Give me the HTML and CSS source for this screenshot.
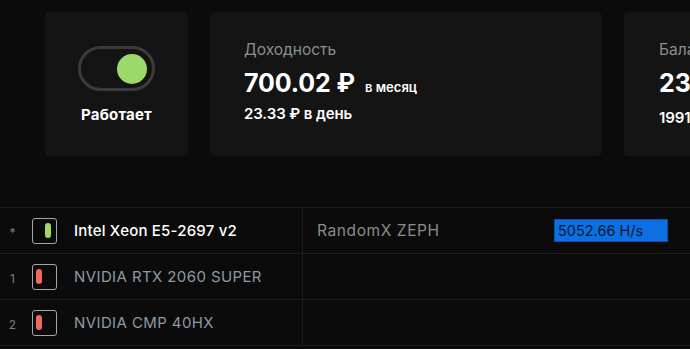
FILE: index.html
```html
<!DOCTYPE html>
<html lang="ru">
<head>
<meta charset="utf-8">
<link rel="stylesheet" href="styles.css">
</head>
<body>
<div class="page">
  <div class="cards">
    <div class="card card-status">
      <div class="toggle"><div class="knob"></div></div>
      <div class="status-label">Работает</div>
    </div>
    <div class="card card-income">
      <div class="card-title">Доходность</div>
      <div class="big-line"><span class="big">700.02 ₽</span><span class="unit">в месяц</span></div>
      <div class="small-line">23.33 ₽ в день</div>
    </div>
    <div class="card card-balance">
      <div class="card-title">Баланс</div>
      <div class="big-line"><span class="big">2331.45 ₽</span></div>
      <div class="small-line small-line2">19917.25 ZEPH</div>
    </div>
  </div>
  <div class="table">
    <div class="row">
      <div class="cell-dev">
        <span class="idx">*</span>
        <span class="chip"><span class="pill pill-on"></span></span>
        <span class="name name-active">Intel Xeon E5-2697 v2</span>
      </div>
      <div class="cell-algo">
        <span class="algo">RandomX ZEPH</span>
        <span class="rate">5052.66 H/s</span>
      </div>
    </div>
    <div class="row">
      <div class="cell-dev">
        <span class="idx">1</span>
        <span class="chip"><span class="pill pill-off"></span></span>
        <span class="name">NVIDIA RTX 2060 SUPER</span>
      </div>
      <div class="cell-algo"></div>
    </div>
    <div class="row">
      <div class="cell-dev">
        <span class="idx">2</span>
        <span class="chip"><span class="pill pill-off"></span></span>
        <span class="name">NVIDIA CMP 40HX</span>
      </div>
      <div class="cell-algo"></div>
    </div>
  </div>
</div>
</body>
</html>
```

FILE: styles.css
```css
html, body {
  margin: 0;
  padding: 0;
  background: #0b0b0b;
  overflow: hidden;
}
body {
  font-family: "Inter", "Noto Sans", sans-serif;
  color: #fff;
  width: 690px;
  height: 349px;
}
.page {
  width: 690px;
  overflow: hidden;
}
.cards {
  display: flex;
  gap: 22px;
  padding: 12px 0 0 45px;
  height: 144px;
}
.card {
  flex: none;
  background: #141414;
  border-radius: 5px;
  height: 144px;
  box-sizing: border-box;
}
.card-status {
  width: 143px;
  display: flex;
  flex-direction: column;
  align-items: center;
  padding-top: 34px;
}
.toggle {
  width: 77px;
  height: 45px;
  box-sizing: border-box;
  border: 3px solid #3b3b3b;
  border-radius: 23px;
  display: flex;
  align-items: center;
  justify-content: flex-end;
  padding-right: 5px;
}
.knob {
  width: 30px;
  height: 30px;
  border-radius: 50%;
  background: #9bd96b;
}
.status-label {
  margin-top: 14px;
  font-size: 15px;
  font-weight: 700;
  letter-spacing: 0.2px;
}
.card-income {
  width: 392px;
  padding: 28px 0 0 34px;
}
.card-balance {
  width: 300px;
  padding: 28px 0 0 35px;
}
.card-title {
  font-size: 15.5px;
  color: #8a8f93;
  line-height: 20px;
}
.big-line {
  display: flex;
  align-items: baseline;
  margin-top: 9px;
  line-height: 28px;
}
.big {
  font-size: 25px;
  font-weight: 700;
  letter-spacing: -0.1px;
}
.unit {
  font-size: 13px;
  font-weight: 600;
  margin-left: 10px;
}
.small-line {
  margin-top: 3px;
  font-size: 15px;
  font-weight: 600;
  letter-spacing: -0.1px;
  line-height: 20px;
}
.small-line2 {
  margin-top: 11px;
}
.table {
  margin-top: 51px;
  border-top: 1px solid #1c1c1c;
}
.row {
  display: grid;
  grid-template-columns: 303px 1fr;
  height: 45px;
  border-bottom: 1px solid #1c1c1c;
}
.cell-dev {
  display: flex;
  align-items: center;
  border-right: 1px solid #1c1c1c;
}
.idx {
  width: 32px;
  text-align: center;
  box-sizing: border-box;
  padding-right: 7px;
  font-size: 12px;
  color: #7a7f84;
  padding-top: 4px;
}
.chip {
  width: 25px;
  height: 26px;
  box-sizing: border-box;
  border: 1.5px solid #a6a6a6;
  border-radius: 3px;
  display: flex;
  align-items: center;
  padding: 0 3px;
}
.pill {
  width: 6px;
  height: 15px;
  border-radius: 3px;
}
.pill-on {
  background: #9bd96b;
  margin-left: auto;
  margin-right: 2px;
}
.pill-off {
  background: #f0695e;
}
.name {
  margin-left: 17px;
  font-size: 15px;
  letter-spacing: 0.4px;
  color: #8d9aa6;
}
.name-active {
  color: #fff;
  font-weight: 500;
  letter-spacing: 0.2px;
}
.cell-algo {
  display: flex;
  align-items: center;
  padding-left: 14px;
}
.algo {
  font-size: 15.5px;
  letter-spacing: 0.6px;
  color: #8c8c8c;
  width: 237px;
}
.rate {
  background: #0c6fe3;
  border: 1px solid #0a4fa8;
  width: 114px;
  height: 23px;
  box-sizing: border-box;
  font-size: 14.5px;
  color: #0a1a2e;
  padding-left: 3px;
  line-height: 21px;
}
```
